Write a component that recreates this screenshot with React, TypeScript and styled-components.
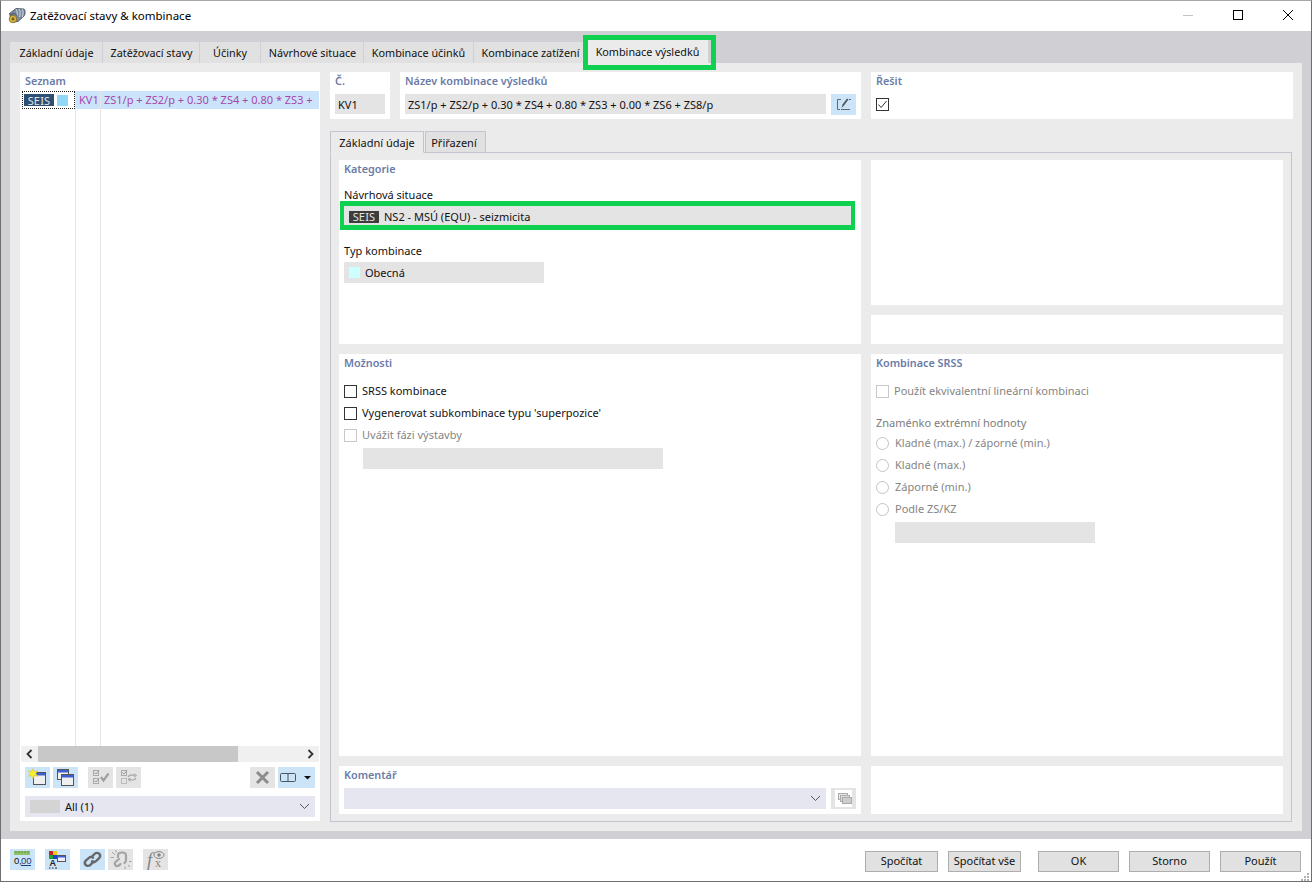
import styled, { createGlobalStyle } from "styled-components"

const Global = createGlobalStyle`
    html, body {
        margin: 0;
        padding: 0;
        background: #fff;
    }
    * {
        box-sizing: border-box;
    }
    body {
        font-family: "Noto Sans", "Open Sans", sans-serif;
        font-size: 11px;
        color: #111;
    }
`

const Win = styled.div`
    width: 1312px;
    height: 882px;
    display: flex;
    flex-direction: column;
    border: 1px solid #6e6e6e;
    border-top-color: #a8a8a8;
    background: #fff;
    overflow: hidden;
`

const TitleBar = styled.header`
    height: 30px;
    flex: none;
    display: flex;
    align-items: center;
    padding-left: 7px;
    font-size: 11.5px;
    gap: 4px;
`

const TitleText = styled.span`
    flex: 1;
    padding-bottom: 2px;
    color: #000;
`

const WinButton = styled.div`
    width: 46px;
    height: 30px;
    padding-bottom: 2px;
    display: flex;
    align-items: center;
    justify-content: center;
`

const Body = styled.div`
    flex: 1;
    min-height: 0;
    background: #d0d0d4;
    padding: 11px 9px 8px;
    display: flex;
    flex-direction: column;
`

const TabStrip = styled.div`
    height: 21px;
    flex: none;
    display: flex;
    gap: 1px;
    align-items: flex-end;
`

const Tab = styled.div<{ $w: number; $pl: number; $active?: boolean }>`
    position: relative;
    width: ${(p) => p.$w}px;
    height: ${(p) => (p.$active ? 24 : 21)}px;
    flex: none;
    display: flex;
    align-items: center;
    justify-content: center;
    padding-left: ${(p) => p.$pl}px;
    font-size: 10.8px;
    background: ${(p) => (p.$active ? "#ebebeb" : "#e1e1e1")};
    color: #111;
`

const GreenMark = styled.div<{ $t: number; $r: number; $b: number; $l: number; $side: number }>`
    position: absolute;
    top: ${(p) => p.$t}px;
    right: ${(p) => p.$r}px;
    bottom: ${(p) => p.$b}px;
    left: ${(p) => p.$l}px;
    border-style: solid;
    border-color: #10d14f;
    border-width: 5px ${(p) => p.$side}px;
    pointer-events: none;
    z-index: 2;
`

const Content = styled.div`
    flex: 1;
    min-height: 0;
    background: #ebebeb;
    padding: 9px 9px 10px 10px;
    display: flex;
    gap: 10px;
`

const LeftPanel = styled.aside`
    width: 300px;
    flex: none;
    background: #fff;
    display: flex;
    flex-direction: column;
`

const Heading = styled.div`
    height: 18px;
    line-height: 18px;
    font-size: 10.8px;
    font-weight: 600;
    color: #6b7ba8;
    white-space: nowrap;
`

const LeftHeading = styled(Heading)`
    padding-left: 5px;
    margin-bottom: 1px;
`

const ListBody = styled.div`
    flex: 1;
    min-height: 0;
    display: flex;
    padding: 0 1px 0 0;
`

const ListCol = styled.div<{ $w?: number }>`
    width: ${(p) => (p.$w ? `${p.$w}px` : "auto")};
    flex: ${(p) => (p.$w ? "none" : 1)};
    min-width: 0;
    border-right: ${(p) => (p.$w ? "1px solid #e6e6e6" : "none")};
`

const FocusCell = styled.div`
    height: 18px;
    margin-left: 2px;
    padding-left: 1px;
    border: 1px dotted #222;
    display: flex;
    align-items: center;
    gap: 3px;
`

const RowCell = styled.div<{ $pad: number }>`
    height: 18px;
    line-height: 18px;
    padding-left: ${(p) => p.$pad}px;
    background: #cce4fb;
    color: #a648aa;
    white-space: nowrap;
`

const Badge = styled.span<{ $bg: string }>`
    width: 30px;
    height: 12px;
    flex: none;
    display: flex;
    align-items: center;
    justify-content: center;
    background: ${(p) => p.$bg};
    color: #e4e4e4;
    font-size: 11px;
    letter-spacing: 0.2px;
`

const Swatch = styled.span<{ $bg: string }>`
    width: 11px;
    height: 11px;
    flex: none;
    background: ${(p) => p.$bg};
`

const ScrollBar = styled.div`
    height: 16px;
    margin: 0 1px;
    flex: none;
    display: flex;
    align-items: center;
    background: #f0f0f0;
`

const ScrollArrow = styled.div`
    width: 17px;
    height: 16px;
    flex: none;
    display: flex;
    align-items: center;
    justify-content: center;
`

const ScrollTrack = styled.div`
    flex: 1;
    height: 16px;
`

const ScrollThumb = styled.div`
    width: 200px;
    height: 16px;
    background: #c8c8c8;
`

const Toolbar = styled.div`
    height: 21px;
    margin: 5px 5px 0;
    flex: none;
    display: flex;
    gap: 3px;
`

const IconBtn = styled.div<{ $on?: boolean; $w?: number; $ml?: number }>`
    width: ${(p) => p.$w ?? 25}px;
    height: 21px;
    flex: none;
    margin-left: ${(p) => p.$ml ?? 0}px;
    display: flex;
    align-items: center;
    justify-content: center;
    background: ${(p) => (p.$on ? "#cce4f7" : "#e4e4e4")};
`

const Select = styled.div`
    flex: 1;
    height: 21px;
    display: flex;
    align-items: center;
    background: #e6e6f0;
    padding: 0 5px;
`

const FilterSelect = styled(Select)`
    flex: none;
    margin: 8px 5px 4px;
    gap: 5px;
`

const GreySwatch = styled.span`
    width: 30px;
    height: 13px;
    background: #d4d4d4;
`

const Grow = styled.span`
    flex: 1;
`

const RightCol = styled.main`
    flex: 1;
    min-width: 0;
    display: flex;
    flex-direction: column;
`

const TopRow = styled.div`
    display: grid;
    grid-template-columns: 60px 461px 1fr;
    gap: 10px;
    height: 47px;
    flex: none;
`

const Panel = styled.section`
    background: #fff;
    padding: 0 5px;
    min-width: 0;
`

const Field = styled.div<{
    $w?: number
    $h?: number
    $ml?: number
    $mt?: number
    $flex?: boolean
    $inset?: number
}>`
    position: relative;
    width: ${(p) => (p.$w ? `${p.$w}px` : "auto")};
    height: ${(p) => p.$h ?? 21}px;
    margin-left: ${(p) => p.$ml ?? 0}px;
    margin-top: ${(p) => p.$mt ?? 0}px;
    flex: ${(p) => (p.$flex ? 1 : "none")};
    display: flex;
    align-items: center;
    gap: 5px;
    padding: 0 5px 0 ${(p) => p.$inset ?? 3}px;
    background: #e4e4e4;
    white-space: nowrap;
`

const NameRow = styled.div`
    display: flex;
    gap: 5px;
    margin-top: 4px;
    align-items: flex-start;
`

const SolveBox = styled.div`
    margin-top: 8px;
`

const Box = styled.span<{ $off?: boolean }>`
    width: 13px;
    height: 13px;
    flex: none;
    display: flex;
    align-items: center;
    justify-content: center;
    background: #fff;
    border: 1px solid ${(p) => (p.$off ? "#c8c8c8" : "#333")};
`

const InnerTabs = styled.div`
    height: 21px;
    margin-top: 12px;
    flex: none;
    display: flex;
    gap: 1px;
`

const InnerTab = styled.div<{ $w: number; $active?: boolean }>`
    width: ${(p) => p.$w}px;
    display: flex;
    align-items: center;
    justify-content: center;
    margin-bottom: -1px;
    padding-right: ${(p) => (p.$active ? 0 : 3)}px;
    position: relative;
    border: 1px solid #c4c4ce;
    border-bottom-color: ${(p) => (p.$active ? "#ebebeb" : "#c4c4ce")};
    background: ${(p) => (p.$active ? "#ebebeb" : "#e1e1e1")};
`

const Frame = styled.div`
    flex: 1;
    min-height: 0;
    margin: 0 1px -1px 0;
    border: 1px solid #c4c4ce;
    padding: 7px 8px;
    display: grid;
    grid-template-columns: 522px 1fr;
    grid-template-rows: 184px 402px 48px;
    gap: 10px;
`

const SideStack = styled.div`
    display: flex;
    flex-direction: column;
    gap: 10px;
`

const SideBlock = styled.div<{ $h: number }>`
    height: ${(p) => p.$h}px;
    flex: none;
    background: #fff;
`

const BlankPanel = styled.div`
    background: #fff;
`

const Label = styled.div<{ $mt: number; $off?: boolean }>`
    height: 16px;
    line-height: 16px;
    margin-top: ${(p) => p.$mt}px;
    margin-bottom: 3px;
    color: ${(p) => (p.$off ? "#7c7c7c" : "#111")};
    white-space: nowrap;
`

const RadioDot = styled.span`
    width: 13px;
    height: 13px;
    flex: none;
    border-radius: 50%;
    border: 1px solid #c4c4c4;
    background: #fff;
    margin-right: 1px;
`

const OptRow = styled.div<{ $off?: boolean }>`
    height: 22px;
    padding-bottom: 2px;
    display: flex;
    align-items: center;
    gap: 5px;
    color: ${(p) => (p.$off ? "#858585" : "#111")};
    white-space: nowrap;

    ${Box}, ${RadioDot} {
        margin-top: 2px;
    }
`

const OptGroup = styled.div`
    margin-top: 8px;
`

const RadioGroup = styled.div`
    margin-top: -2px;
`

const CommentRow = styled.div`
    display: flex;
    gap: 5px;
    margin-top: 4px;
`

const Footer = styled.footer`
    position: relative;
    height: 42px;
    flex: none;
    display: flex;
    align-items: flex-start;
    padding: 10px 10px 0 9px;
`

const ToolGroup = styled.div`
    display: flex;
    gap: 3px;
`

const ActionGroup = styled.div`
    display: flex;
    gap: 10px;
    margin-top: 2px;
`

const Action = styled.button<{ $w: number; $ml?: number }>`
    width: ${(p) => p.$w}px;
    height: 21px;
    margin-left: ${(p) => p.$ml ?? 0}px;
    padding: 0 0 2px;
    font: inherit;
    color: #111;
    background: #e1e1e1;
    border: 1px solid #adadad;
`

const Grip = styled.svg`
    position: absolute;
    right: 1px;
    bottom: 0;
`

const AppIcon = () => (
    <svg width="18" height="18" viewBox="0 0 18 18">
        <path d="M1.5 6.5 8 1.5 16 2c1.5 1.5 1.5 5 0 7l-6 5.5-6 .5Z" fill="#7b8ba2" stroke="#39424f" strokeWidth="0.8" />
        <path d="M8 2c1.5 2 1.5 5 1 7M11 2c1.5 2 1.5 5 .5 8M14 2c1.5 2 1.3 5 .3 8" stroke="#d6dee8" strokeWidth="1" fill="none" />
        <path d="M2 8c3-2 6-2 7 1" stroke="#39424f" strokeWidth="0.8" fill="none" />
        <circle cx="5" cy="12" r="3.8" fill="#d8b23c" stroke="#6d5c20" strokeWidth="0.7" />
        <circle cx="5" cy="12" r="1.4" fill="#6d5c20" />
    </svg>
)

const MiniWindow = ({ x, y, w, h }: { x: number; y: number; w: number; h: number }) => (
    <g>
        <rect x={x + 0.5} y={y + 0.5} width={w - 1} height={h - 1} fill="#f0f0f0" stroke="#555" />
        <rect x={x + 1} y={y + 1} width={w - 2} height="2.5" fill="#3f5fd0" />
    </g>
)

const NewIcon = () => (
    <svg width="25" height="21" viewBox="0 0 25 21">
        <MiniWindow x={8} y={5} w={13} h={13} />
        <path d="M8 1.5 9.4 4.6 12.8 3.8 10.8 6.6 12.8 9.4 9.4 8.6 8 11.8 6.6 8.6 3.2 9.4 5.2 6.6 3.2 3.8 6.6 4.6Z" fill="#f8ee30" stroke="#c8b820" strokeWidth="0.4" />
    </svg>
)

const CopyIcon = () => (
    <svg width="25" height="21" viewBox="0 0 25 21">
        <MiniWindow x={4} y={2} w={12} h={11} />
        <MiniWindow x={8} y={7} w={13} h={12} />
    </svg>
)

const CheckAllIcon = () => (
    <svg width="25" height="21" viewBox="0 0 25 21" fill="none">
        <rect x="5.5" y="3.5" width="5" height="5" stroke="#aaa" />
        <rect x="5.5" y="11.5" width="5" height="5" stroke="#aaa" />
        <path d="M6.5 5.5 8 7 11 3.5M6.5 13.5 8 15 11 11.5" stroke="#999" />
        <path d="M13 10 15.5 13.5 20.5 6.5" stroke="#a0a0a0" strokeWidth="2.2" />
    </svg>
)

const CheckSwapIcon = () => (
    <svg width="25" height="21" viewBox="0 0 25 21" fill="none">
        <rect x="5.5" y="3.5" width="5" height="5" stroke="#aaa" />
        <rect x="5.5" y="11.5" width="5" height="5" stroke="#bbb" />
        <path d="M6.5 5.5 8 7 11 3.5" stroke="#999" />
        <path d="M12 10c1-2.5 4-2.5 7-1.5M20 11c-1 2-4 2.5-7 1" stroke="#a4a4a4" strokeWidth="1.3" />
        <path d="M18 6.5 20.5 8.5 18 10M14.5 11 12 12.5 14.5 14.5" stroke="#a4a4a4" />
    </svg>
)

const DeleteIcon = () => (
    <svg width="25" height="21" viewBox="0 0 25 21" fill="none">
        <path d="M7 5 18 16M18 5 7 16" stroke="#8c8c8c" strokeWidth="3" />
    </svg>
)

const PanesIcon = () => (
    <svg width="37" height="21" viewBox="0 0 37 21" fill="none">
        <rect x="2.5" y="6.5" width="15" height="8" rx="1" stroke="#4a5560" />
        <path d="M10 6v9" stroke="#4a5560" />
        <path d="M26 9h7l-3.5 3.5Z" fill="#111" />
    </svg>
)

const ChevronDown = () => (
    <svg width="11" height="7" viewBox="0 0 11 7" fill="none">
        <path d="M1 1 5.5 5.5 10 1" stroke="#555" />
    </svg>
)

const ScrollGlyph = ({ flip }: { flip?: boolean }) => (
    <svg width="7" height="10" viewBox="0 0 7 10" fill="none">
        <path d={flip ? "M1.5 1 5.5 5 1.5 9" : "M5.5 1 1.5 5 5.5 9"} stroke="#333" strokeWidth="1.8" />
    </svg>
)

const EditIcon = () => (
    <svg width="25" height="21" viewBox="0 0 25 21" fill="none">
        <path d="M10 5.5H6.5v10H9" stroke="#667" />
        <path d="M10 15.5h9" stroke="#667" />
        <path d="M10.5 14 11.5 10.5 16 4.5 17.5 5.5 13 11.5Z" fill="#50585f" />
        <path d="M18 5.5h2" stroke="#667" />
    </svg>
)

const CheckMark = () => (
    <svg width="11" height="11" viewBox="0 0 11 11" fill="none">
        <path d="M1.5 5.5 4.2 8.5 9.5 2" stroke="#333" />
    </svg>
)

const StackIcon = () => (
    <svg width="17" height="17" viewBox="0 0 17 17">
        <rect width="17" height="17" fill="#fff" />
        <rect x="3.5" y="3.5" width="9" height="6" fill="#e8e8e8" stroke="#aaa" />
        <rect x="5.5" y="5.5" width="9" height="6" fill="#dcdcdc" stroke="#aaa" />
        <rect x="7.5" y="7.5" width="9" height="6" fill="#cdcdcd" stroke="#aaa" />
    </svg>
)

const UnitsIcon = () => (
    <svg width="25" height="21" viewBox="0 0 25 21">
        <rect x="4" y="2" width="16" height="4" fill="#8fc06a" />
        <path d="M6 2v2M9 2v2M12 2v2M15 2v2M18 2v2" stroke="#5d8f40" />
        <text x="4" y="15" fontFamily="Liberation Sans, sans-serif" fontSize="9.5" fill="#111">
            0,
        </text>
        <text x="11" y="15" fontFamily="Liberation Sans, sans-serif" fontSize="9.5" fill="#223c80">
            00
        </text>
        <path d="M11 16.5h10" stroke="#223c80" />
    </svg>
)

const ColorsIcon = () => (
    <svg width="25" height="21" viewBox="0 0 25 21">
        <rect x="4" y="2" width="4" height="4" fill="#d02020" />
        <rect x="8" y="2" width="4" height="4" fill="#e8c820" />
        <rect x="4" y="6" width="4" height="4" fill="#20a030" />
        <rect x="8" y="6" width="4" height="4" fill="#2040c0" />
        <text x="4.5" y="17" fontFamily="Liberation Sans, sans-serif" fontSize="9" fontWeight="700" fill="#222">
            A
        </text>
        <path d="M4 19h1.5M7 19h1.5M10 19h2" stroke="#222" />
        <rect x="12.5" y="6.5" width="8" height="6" fill="#eef" stroke="#555" />
        <rect x="13" y="7" width="7" height="1.5" fill="#3f5fd0" />
    </svg>
)

const LinkIcon = () => (
    <svg width="25" height="21" viewBox="0 0 25 21" fill="none">
        <g stroke="#66686c" strokeWidth="2.4" strokeLinecap="round">
            <path d="M11.5 8 14.5 5c1.7-1.6 4-1.4 5 0s.7 3.2-.6 4.4L16 12.2c-1.4 1.2-3 1.1-4 .1" />
            <path d="M13.5 12.5 10.5 15.8c-1.6 1.5-3.8 1.4-4.9.1s-.9-3.3.4-4.6L9 8.8c1.3-1.2 3-1.2 4-.1" />
        </g>
    </svg>
)

const UnlinkIcon = () => (
    <svg width="25" height="21" viewBox="0 0 25 21" fill="none">
        <g stroke="#a4a4a4" strokeWidth="2.2" strokeLinecap="round">
            <path d="M10 8V6.5c0-4 8-4 8 0V11c0 1.5-.6 2.5-1.5 3" />
            <path d="M11 10 7.5 13c-1.6 1.6-.2 4.4 2 4 1.2-.2 2.2-1 3-2" />
        </g>
        <path d="M4 3l3 3M2.5 8.5h3.5M8 1v2.5M20 16l2 2M17 17.5v2.5M21 12.5h2.5" stroke="#a4a4a4" />
    </svg>
)

const FormulaIcon = () => (
    <svg width="25" height="21" viewBox="0 0 25 21" fill="none">
        <text x="4" y="17" fontFamily="Liberation Serif, serif" fontStyle="italic" fontSize="19" fill="#858585">
            f
        </text>
        <text x="12" y="18" fontFamily="Liberation Serif, serif" fontSize="12" fill="#858585">
            x
        </text>
        <ellipse cx="16" cy="6" rx="5" ry="3.4" stroke="#858585" />
        <circle cx="16" cy="6" r="1.8" fill="#858585" />
    </svg>
)

const tabs: [string, number, number][] = [
    ["Základní údaje", 92, 1],
    ["Zatěžovací stavy", 96, 1],
    ["Účinky", 60, 0],
    ["Návrhové situace", 102, 1],
    ["Kombinace účinků", 109, 0],
    ["Kombinace zatížení", 109, 4],
]

const radios = ["Kladné (max.) / záporné (min.)", "Kladné (max.)", "Záporné (min.)", "Podle ZS/KZ"]

const App = () => {
    return (
        <Win>
            <Global />
            <TitleBar>
                <AppIcon />
                <TitleText>Zatěžovací stavy &amp; kombinace</TitleText>
                <WinButton>
                    <svg width="10" height="10" viewBox="0 0 10 10">
                        <path d="M0 5.5h10" stroke="#c4c4c4" />
                    </svg>
                </WinButton>
                <WinButton>
                    <svg width="10" height="10" viewBox="0 0 10 10">
                        <rect x="0.5" y="0.5" width="9" height="9" fill="none" stroke="#000" />
                    </svg>
                </WinButton>
                <WinButton>
                    <svg width="10" height="10" viewBox="0 0 10 10">
                        <path d="M0 0 10 10M10 0 0 10" stroke="#000" />
                    </svg>
                </WinButton>
            </TitleBar>

            <Body>
                <TabStrip>
                    {tabs.map(([name, w, pl]) => (
                        <Tab key={name} $w={w} $pl={pl}>
                            {name}
                        </Tab>
                    ))}
                    <Tab $w={124} $pl={3} $active>
                        Kombinace výsledků
                        <GreenMark $t={-4} $r={-8} $b={-7} $l={-1} $side={5} />
                    </Tab>
                </TabStrip>

                <Content>
                    <LeftPanel>
                        <LeftHeading>Seznam</LeftHeading>
                        <ListBody>
                            <ListCol $w={56}>
                                <FocusCell>
                                    <Badge $bg="#2d4f73">SEIS</Badge>
                                    <Swatch $bg="#8fd8f8" />
                                </FocusCell>
                            </ListCol>
                            <ListCol $w={25}>
                                <RowCell $pad={3}>KV1</RowCell>
                            </ListCol>
                            <ListCol>
                                <RowCell $pad={3}>ZS1/p + ZS2/p + 0.30 * ZS4 + 0.80 * ZS3 +</RowCell>
                            </ListCol>
                        </ListBody>
                        <ScrollBar>
                            <ScrollArrow>
                                <ScrollGlyph />
                            </ScrollArrow>
                            <ScrollTrack>
                                <ScrollThumb />
                            </ScrollTrack>
                            <ScrollArrow>
                                <ScrollGlyph flip />
                            </ScrollArrow>
                        </ScrollBar>
                        <Toolbar>
                            <IconBtn $on>
                                <NewIcon />
                            </IconBtn>
                            <IconBtn $on>
                                <CopyIcon />
                            </IconBtn>
                            <IconBtn $ml={7}>
                                <CheckAllIcon />
                            </IconBtn>
                            <IconBtn>
                                <CheckSwapIcon />
                            </IconBtn>
                            <Grow />
                            <IconBtn>
                                <DeleteIcon />
                            </IconBtn>
                            <IconBtn $on $w={37}>
                                <PanesIcon />
                            </IconBtn>
                        </Toolbar>
                        <FilterSelect>
                            <GreySwatch />
                            <span>All (1)</span>
                            <Grow />
                            <ChevronDown />
                        </FilterSelect>
                    </LeftPanel>

                    <RightCol>
                        <TopRow>
                            <Panel>
                                <Heading>Č.</Heading>
                                <Field $h={20} $mt={4}>
                                    KV1
                                </Field>
                            </Panel>
                            <Panel>
                                <Heading>Název kombinace výsledků</Heading>
                                <NameRow>
                                    <Field $h={20} $flex>
                                        ZS1/p + ZS2/p + 0.30 * ZS4 + 0.80 * ZS3 + 0.00 * ZS6 + ZS8/p
                                    </Field>
                                    <IconBtn $on>
                                        <EditIcon />
                                    </IconBtn>
                                </NameRow>
                            </Panel>
                            <Panel>
                                <Heading>Řešit</Heading>
                                <SolveBox>
                                    <Box>
                                        <CheckMark />
                                    </Box>
                                </SolveBox>
                            </Panel>
                        </TopRow>

                        <InnerTabs>
                            <InnerTab $w={94} $active>
                                Základní údaje
                            </InnerTab>
                            <InnerTab $w={61}>Přiřazení</InnerTab>
                        </InnerTabs>

                        <Frame>
                            <Panel>
                                <Heading>Kategorie</Heading>
                                <Label $mt={9}>Návrhová situace</Label>
                                <Field $w={507} $inset={5}>
                                    <Badge $bg="#3c3c3c">SEIS</Badge>
                                    NS2 - MSÚ (EQU) - seizmicita
                                    <GreenMark $t={-5} $r={-4} $b={-3} $l={-4} $side={4} />
                                </Field>
                                <Label $mt={16}>Typ kombinace</Label>
                                <Field $w={200} $inset={5}>
                                    <Swatch $bg="#ccffff" />
                                    Obecná
                                </Field>
                            </Panel>
                            <SideStack>
                                <SideBlock $h={145} />
                                <SideBlock $h={29} />
                            </SideStack>

                            <Panel>
                                <Heading>Možnosti</Heading>
                                <OptGroup>
                                    <OptRow>
                                        <Box />
                                        SRSS kombinace
                                    </OptRow>
                                    <OptRow>
                                        <Box />
                                        Vygenerovat subkombinace typu 'superpozice'
                                    </OptRow>
                                    <OptRow $off>
                                        <Box $off />
                                        Uvážit fázi výstavby
                                    </OptRow>
                                </OptGroup>
                                <Field $w={300} $ml={19} $mt={2} />
                            </Panel>
                            <Panel>
                                <Heading>Kombinace SRSS</Heading>
                                <OptGroup>
                                    <OptRow $off>
                                        <Box $off />
                                        Použít ekvivalentní lineární kombinaci
                                    </OptRow>
                                </OptGroup>
                                <Label $mt={13} $off>
                                    Znaménko extrémní hodnoty
                                </Label>
                                <RadioGroup>
                                    {radios.map((r) => (
                                        <OptRow key={r} $off>
                                            <RadioDot />
                                            {r}
                                        </OptRow>
                                    ))}
                                </RadioGroup>
                                <Field $w={200} $ml={19} $mt={2} />
                            </Panel>

                            <Panel>
                                <Heading>Komentář</Heading>
                                <CommentRow>
                                    <Select>
                                        <Grow />
                                        <ChevronDown />
                                    </Select>
                                    <IconBtn>
                                        <StackIcon />
                                    </IconBtn>
                                </CommentRow>
                            </Panel>
                            <BlankPanel />
                        </Frame>
                    </RightCol>
                </Content>
            </Body>

            <Footer>
                <ToolGroup>
                    <IconBtn $on>
                        <UnitsIcon />
                    </IconBtn>
                    <IconBtn $on $ml={7}>
                        <ColorsIcon />
                    </IconBtn>
                    <IconBtn $on $ml={7}>
                        <LinkIcon />
                    </IconBtn>
                    <IconBtn>
                        <UnlinkIcon />
                    </IconBtn>
                    <IconBtn $ml={7}>
                        <FormulaIcon />
                    </IconBtn>
                </ToolGroup>
                <Grow />
                <ActionGroup>
                    <Action $w={73}>Spočítat</Action>
                    <Action $w={73}>Spočítat vše</Action>
                    <Action $w={81} $ml={7}>
                        OK
                    </Action>
                    <Action $w={81}>Storno</Action>
                    <Action $w={81}>Použít</Action>
                </ActionGroup>
                <Grip width="10" height="8" viewBox="0 0 10 8" fill="#b0b0b0">
                    <rect x="7" y="0" width="2" height="2" />
                    <rect x="4" y="3" width="2" height="2" />
                    <rect x="7" y="3" width="2" height="2" />
                    <rect x="1" y="6" width="2" height="2" />
                    <rect x="4" y="6" width="2" height="2" />
                    <rect x="7" y="6" width="2" height="2" />
                </Grip>
            </Footer>
        </Win>
    )
}

export default App
